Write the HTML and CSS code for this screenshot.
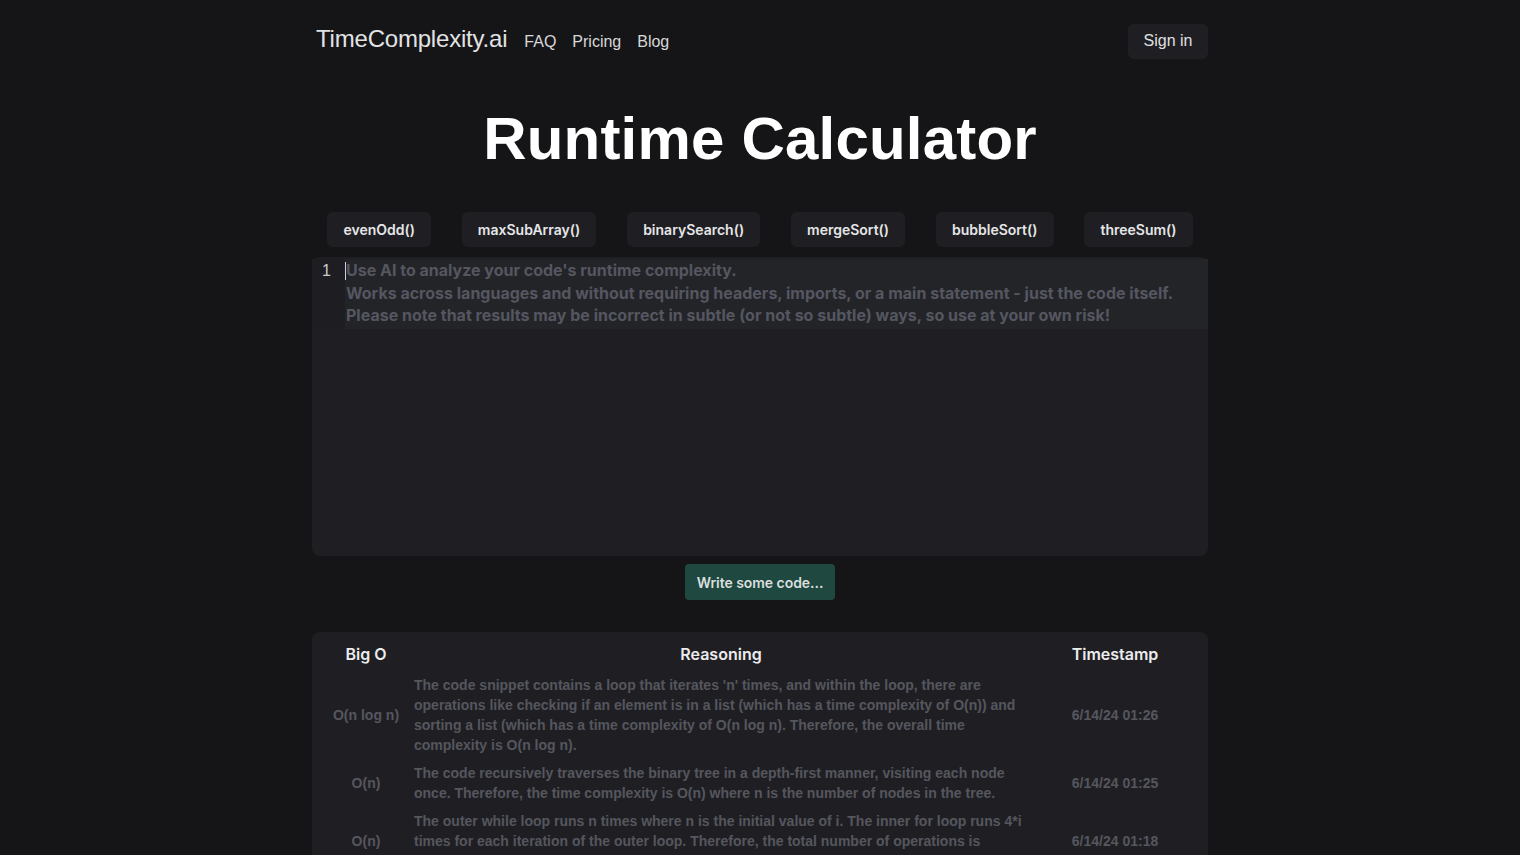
FILE: index.html
```html
<!DOCTYPE html>
<html lang="en">
<head>
<meta charset="utf-8">
<title>Runtime Calculator</title>
<link rel="stylesheet" href="styles.css">
</head>
<body>
<div class="page">
  <header class="topbar">
    <nav class="nav">
      <a class="logo" href="#">TimeComplexity.ai</a>
      <a class="navlink" href="#">FAQ</a>
      <a class="navlink" href="#">Pricing</a>
      <a class="navlink" href="#">Blog</a>
    </nav>
    <button class="signin">Sign in</button>
  </header>

  <h1 class="title">Runtime Calculator</h1>

  <div class="examples">
    <button class="example">evenOdd()</button>
    <button class="example">maxSubArray()</button>
    <button class="example">binarySearch()</button>
    <button class="example">mergeSort()</button>
    <button class="example">bubbleSort()</button>
    <button class="example">threeSum()</button>
  </div>

  <div class="editor">
    <div class="active-line">
      <div class="gutter">1</div>
      <div class="code"><span class="caret"></span>Use AI to analyze your code's runtime complexity.<br>Works across languages and without requiring headers, imports, or a main statement - just the code itself.<br>Please note that results may be incorrect in subtle (or not so subtle) ways, so use at your own risk!</div>
    </div>
  </div>

  <div class="action">
    <button class="submit">Write some code...</button>
  </div>

  <div class="results">
    <table class="table">
      <thead>
        <tr>
          <th class="col-o">Big O</th>
          <th class="col-r">Reasoning</th>
          <th class="col-t">Timestamp</th>
        </tr>
      </thead>
      <tbody>
        <tr>
          <td class="col-o">O(n log n)</td>
          <td class="col-r reason">The code snippet contains a loop that iterates 'n' times, and within the loop, there are operations like checking if an element is in a list (which has a time complexity of O(n)) and sorting a list (which has a time complexity of O(n log n). Therefore, the overall time complexity is O(n log n).</td>
          <td class="col-t">6/14/24 01:26</td>
        </tr>
        <tr>
          <td class="col-o">O(n)</td>
          <td class="col-r reason">The code recursively traverses the binary tree in a depth-first manner, visiting each node once. Therefore, the time complexity is O(n) where n is the number of nodes in the tree.</td>
          <td class="col-t">6/14/24 01:25</td>
        </tr>
        <tr>
          <td class="col-o">O(n)</td>
          <td class="col-r reason">The outer while loop runs n times where n is the initial value of i. The inner for loop runs 4*i times for each iteration of the outer loop. Therefore, the total number of operations is proportional to n, since i is halved.</td>
          <td class="col-t">6/14/24 01:18</td>
        </tr>
      </tbody>
    </table>
  </div>
</div>
</body>
</html>
```

FILE: styles.css
```css
* { box-sizing: border-box; }

html, body {
  margin: 0;
  padding: 0;
  background: #151517;
  height: 855px;
  overflow: hidden;
}

body {
  font-family: "Liberation Sans", Arial, sans-serif;
  color: #e4e4e7;
}

.page {
  width: 896px;
  margin: 0 auto;
}

.topbar {
  display: flex;
  align-items: center;
  justify-content: space-between;
  padding-top: 24px;
  height: 59px;
}

.nav {
  display: flex;
  align-items: baseline;
  gap: 16px;
  padding-left: 4px;
  margin-top: -5px;
}

.logo {
  font-size: 24px;
  color: #e2e2e4;
  text-decoration: none;
  letter-spacing: -0.2px;
  margin-right: 1px;
}

.navlink {
  font-size: 16px;
  color: #d8d8da;
  text-decoration: none;
}

.signin {
  height: 35px;
  width: 80px;
  background: #1f1f23;
  border: none;
  border-radius: 6px;
  color: #e0e0e2;
  font-family: "Liberation Sans", Arial, sans-serif;
  font-size: 16px;
  padding: 0 0 2px 0;
}

.title {
  margin: 44px 0 0 0;
  text-align: center;
  font-size: 60px;
  line-height: 72px;
  font-weight: 700;
  color: #ffffff;
  letter-spacing: 0.2px;
}

.examples {
  display: flex;
  justify-content: space-around;
  margin-top: 37px;
}

.example {
  height: 35px;
  padding: 0 16px;
  background: #1f1f23;
  border: none;
  border-radius: 6px;
  color: #e6e6e8;
  font-family: Inter, "Noto Sans", sans-serif;
  font-weight: 600;
  font-size: 14px;
}

.editor {
  margin-top: 10px;
  height: 299px;
  background: #1f1f23;
  border-radius: 8px;
  padding-top: 2px;
}

.active-line {
  display: flex;
  background: #232428;
  height: 70px;
}

.gutter {
  width: 33px;
  flex: none;
  background: #1e1e22;
  color: #c8c8cc;
  font-family: "Liberation Sans", Arial, sans-serif;
  font-size: 16px;
  padding: 1px 0 0 10px;
  line-height: 22.5px;
}

.code {
  position: relative;
  padding: 0 0 0 1px;
  font-family: Inter, "Noto Sans", sans-serif;
  font-weight: 700;
  font-size: 16px;
  line-height: 22.5px;
  color: #555660;
  white-space: nowrap;
}

.caret {
  position: absolute;
  left: 0;
  top: 3px;
  width: 1px;
  height: 18px;
  background: #d0d0d4;
}

.action {
  display: flex;
  justify-content: center;
  margin-top: 8px;
}

.submit {
  height: 36px;
  padding: 0 12px;
  background: #1e4840;
  border: none;
  border-radius: 4px;
  color: #dadfde;
  font-family: Inter, "Noto Sans", sans-serif;
  font-weight: 600;
  font-size: 14px;
  letter-spacing: -0.05px;
}

.results {
  margin-top: 32px;
  background: #1f1f23;
  border-radius: 8px 8px 0 0;
  padding: 6px 14px 0 14px;
  height: 300px;
}

.table {
  width: 100%;
  border-collapse: collapse;
  table-layout: fixed;
}

.table th {
  font-family: Inter, "Noto Sans", sans-serif;
  font-weight: 600;
  font-size: 16px;
  line-height: 24px;
  color: #ececee;
  padding: 4px 8px 5px 8px;
}

.table td {
  font-family: "Liberation Sans", Arial, sans-serif;
  font-weight: 700;
  font-size: 14px;
  line-height: 20px;
  color: #55565e;
  padding: 4px 8px;
  vertical-align: middle;
}

.col-o { width: 80px; text-align: center; padding-left: 0 !important; padding-right: 0 !important; }
.col-r { width: 630px; }
th.col-r { text-align: center; }
td.reason { text-align: left; }
.col-t { text-align: center; }
```
